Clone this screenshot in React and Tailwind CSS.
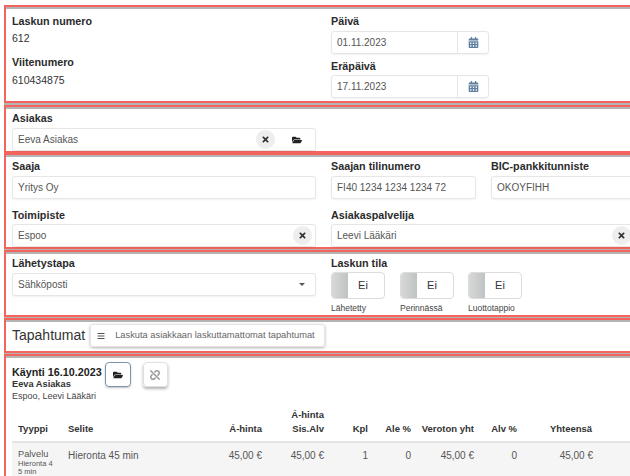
import { FaTimes, FaFolderOpen, FaCalendarAlt, FaUnlink, FaBars } from "react-icons/fa";

const section = "ml-[4px] border-y-2 border-l-2 border-[#f4645c] shadow-[inset_0_2px_0_#b4b4b4,0_2px_0_#b4b4b4] bg-white pl-[6px]";
const label = "text-[10.75px] leading-[14px] font-bold text-[#2b2b2b]";
const field = "h-[23px] rounded-[3px] border border-[#e6e6e6] shadow-[0_1px_2px_rgba(0,0,0,0.06)] bg-white flex items-center pl-[5px] text-[10px] text-[#555]";
const tableCols = "grid grid-cols-[50px_148px_46px_62px_44px_43px_63px_43px_76px] text-right w-[618px] pl-[6px]";

function ClearButton() {
  return (
    <span className="w-[19px] h-[19px] rounded-full bg-[#eeeeee] flex items-center justify-center text-[#333]">
      <FaTimes size={9} />
    </span>
  );
}

function DateField({ value }) {
  return (
    <div className="flex w-[158px] h-[23px] rounded-[3px] border border-[#e6e6e6] shadow-[0_1px_2px_rgba(0,0,0,0.06)]">
      <div className="flex-1 flex items-center pl-[5px] text-[10px] text-[#555] border-r border-[#e6e6e6]">{value}</div>
      <div className="w-[30px] flex items-center justify-center text-[#5f7f9f]">
        <FaCalendarAlt size={11} />
      </div>
    </div>
  );
}

function Toggle({ caption, width }) {
  return (
    <div className={width}>
      <div className="w-[54px] h-[27px] rounded-[4px] border border-[#dcdcdc] flex overflow-hidden">
        <div className="w-[16px] bg-gradient-to-r from-[#d8d8d8] to-[#bfc3c3]"></div>
        <div className="flex-1 flex items-center justify-center pr-[6px] text-[11px] text-[#333]">Ei</div>
      </div>
      <div className="mt-[3px] text-[8.5px] leading-[12px] text-[#444]">{caption}</div>
    </div>
  );
}

const head = "text-[9.5px] font-bold text-[#333]";
const cell = "text-[10px] leading-[14px] text-[#555]";

export default function App() {
  return (
    <div className="w-[640px] h-[476px] overflow-hidden bg-white pt-[5px] font-['Liberation_Sans',Arial,sans-serif]">
      <div className={`${section} h-[98px] flex pt-[7px]`}>
        <div className="w-[319px]">
          <div className={label}>Laskun numero</div>
          <div className="mt-[3px] text-[10.5px] leading-[14px] text-[#333]">612</div>
          <div className={`mt-[10px] ${label}`}>Viitenumero</div>
          <div className="mt-[4px] text-[10.5px] leading-[14px] text-[#333]">610434875</div>
        </div>
        <div>
          <div className={label}>Päivä</div>
          <div className="mt-[3px]"><DateField value="01.11.2023" /></div>
          <div className={`mt-[5px] ${label}`}>Eräpäivä</div>
          <div className="mt-[2px]"><DateField value="17.11.2023" /></div>
        </div>
      </div>

      <div className={`${section} mt-[2px] h-[48px] pt-[4px]`}>
        <div className={label}>Asiakas</div>
        <div className={`${field} mt-[3px] w-[304px] justify-between pr-[13px]`}>
          <span>Eeva Asiakas</span>
          <span className="flex items-center gap-[17px] text-[#222]">
            <ClearButton />
            <FaFolderOpen size={10} />
          </span>
        </div>
      </div>

      <div className={`${section} h-[96px] pt-[4px]`}>
        <div className="grid grid-cols-[319px_160px_160px]">
          <div className={label}>Saaja</div>
          <div className={label}>Saajan tilinumero</div>
          <div className={label}>BIC-pankkitunniste</div>
          <div className={`${field} mt-[3px] w-[304px]`}>Yritys Oy</div>
          <div className={`${field} mt-[3px] w-[145px]`}>FI40 1234 1234 1234 72</div>
          <div className={`${field} mt-[3px] w-[146px]`}>OKOYFIHH</div>
        </div>
        <div className="mt-[9px] grid grid-cols-[319px_320px]">
          <div className={label}>Toimipiste</div>
          <div className={label}>Asiakaspalvelija</div>
          <div className={`${field} mt-[2px] w-[304px] justify-between pr-[3px]`}>
            <span>Espoo</span>
            <ClearButton />
          </div>
          <div className={`${field} mt-[2px] w-[304px] justify-between pr-[3px]`}>
            <span>Leevi Lääkäri</span>
            <ClearButton />
          </div>
        </div>
      </div>

      <div className={`${section} h-[67px] flex pt-[4px] mt-[1px]`}>
        <div className="w-[319px]">
          <div className={label}>Lähetystapa</div>
          <div className={`${field} mt-[3px] w-[304px] justify-between pr-[10px]`}>
            <span>Sähköposti</span>
            <span className="w-0 h-0 border-x-[3px] border-t-[3px] border-x-transparent border-t-[#555]"></span>
          </div>
        </div>
        <div>
          <div className={label}>Laskun tila</div>
          <div className="mt-[2px] flex">
            <Toggle caption="Lähetetty" width="w-[69px]" />
            <Toggle caption="Perinnässä" width="w-[68px]" />
            <Toggle caption="Luottotappio" width="w-[80px]" />
          </div>
        </div>
      </div>

      <div className={`${section} h-[35px] flex items-center gap-[5px] mt-[1px]`}>
        <span className="text-[14px] text-[#333]">Tapahtumat</span>
        <div className="h-[23px] w-[235px] rounded-[3px] border border-[#e4e4e4] shadow-[0_1px_3px_rgba(0,0,0,0.3)] flex items-center pl-[6px] gap-[10px] text-[#555]">
          <FaBars size={8} />
          <span className="text-[9.3px] text-[#666]">Laskuta asiakkaan laskuttamattomat tapahtumat</span>
        </div>
      </div>

      <div className={`${section} mt-[1px] border-b-0 h-[130px] pt-[6px]`}>
        <div className="flex items-start">
          <div className="pt-[3px]">
            <div className="text-[10.75px] leading-[14px] font-bold text-[#222]">Käynti 16.10.2023</div>
            <div className="text-[9.25px] leading-[11px] font-bold text-[#333]">Eeva Asiakas</div>
            <div className="text-[9px] leading-[12px] text-[#444]">Espoo, Leevi Lääkäri</div>
          </div>
          <button className="ml-[3px] w-[26px] h-[25px] rounded-[4px] border border-[#7f93a8] shadow-[0_1px_2px_rgba(0,0,0,0.25)] flex items-center justify-center text-[#222]">
            <FaFolderOpen size={10} />
          </button>
          <button className="ml-[12px] w-[25px] h-[25px] rounded-[4px] border border-[#e0e0e0] shadow-[0_2px_3px_rgba(0,0,0,0.3)] flex items-center justify-center text-[#999]">
            <FaUnlink size={10} />
          </button>
        </div>
        <div className={`${tableCols} mt-[6px] items-end pb-[5px] border-b-2 border-[#e4e4e4]`}>
          <div className={`${head} text-left`}>Tyyppi</div>
          <div className={`${head} text-left`}>Selite</div>
          <div className={head}>Á-hinta</div>
          <div className={`${head} leading-[14px]`}>Á-hinta<br />Sis.Alv</div>
          <div className={head}>Kpl</div>
          <div className={head}>Ale %</div>
          <div className={head}>Veroton yht</div>
          <div className={head}>Alv %</div>
          <div className={`${head} text-center pl-[32px]`}>Yhteensä</div>
        </div>
        <div className={`${tableCols} items-start bg-[#f5f5f5] pt-[6px] h-[40px]`}>
          <div className="text-left">
            <div className="text-[9.25px] leading-[11px] text-[#555]">Palvelu</div>
            <div className="text-[7.5px] leading-[8px] text-[#555]">Hieronta 4<br />5 min</div>
          </div>
          <div className={`${cell} text-left`}>Hieronta 45 min</div>
          <div className={cell}>45,00 €</div>
          <div className={cell}>45,00 €</div>
          <div className={cell}>1</div>
          <div className={cell}>0</div>
          <div className={cell}>45,00 €</div>
          <div className={cell}>0</div>
          <div className={cell}>45,00 €</div>
        </div>
      </div>
    </div>
  );
}
